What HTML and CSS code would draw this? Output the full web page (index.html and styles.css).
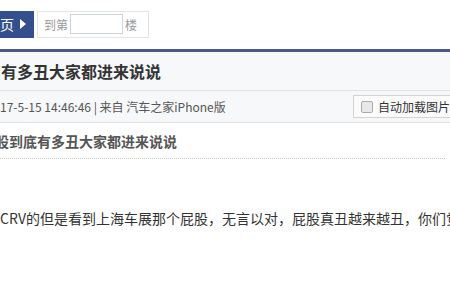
FILE: index.html
```html
<!DOCTYPE html>
<html lang="zh-CN">
<head>
    <meta charset="UTF-8">
    <title>帖子</title>
    <link rel="stylesheet" href="styles.css">
</head>
<body>
    <div class="toolbar">
        <a class="next-btn">页<span class="arrow"></span></a>
        <div class="jump">到第<input class="jump-input" type="text">楼</div>
    </div>

    <div class="post">
        <div class="post-title">有多丑大家都进来说说</div>
        <div class="post-meta">
            <span class="meta-text">17-5-15 14:46:46 | 来自 汽车之家iPhone版</span>
            <label class="auto-img"><span class="check"></span>自动加载图片</label>
        </div>
        <div class="post-body">
            <div class="post-subject">股到底有多丑大家都进来说说</div>
            <p class="post-text">CRV的但是看到上海车展那个屁股，无言以对，屁股真丑越来越丑，你们觉</p>
        </div>
    </div>
</body>
</html>
```

FILE: styles.css
```css
body {
    margin: 0;
    width: 450px;
    overflow: hidden;
    background-color: #fff;
    font-family: "Microsoft YaHei", "Noto Sans CJK SC", sans-serif;
    color: #333;
}

.toolbar {
    display: flex;
    align-items: center;
    height: 49px;
    padding-bottom: 1px;
    box-sizing: border-box;
}

.next-btn {
    display: flex;
    align-items: center;
    width: 34px;
    height: 27px;
    box-sizing: border-box;
    background-color: #34508c;
    color: #fff;
    font-size: 14px;
}

    .next-btn .arrow {
        margin-left: 6px;
        border-left: 6px solid #fff;
        border-top: 5px solid transparent;
        border-bottom: 5px solid transparent;
    }

.jump {
    display: flex;
    align-items: center;
    margin-left: 3px;
    height: 27px;
    padding: 0 11px 0 6px;
    box-sizing: border-box;
    border: 1px solid #e1e4ea;
    font-size: 12px;
    color: #999;
}

.jump-input {
    width: 53px;
    height: 20px;
    box-sizing: border-box;
    margin: 0 2px 0 2px;
    border: 1px solid #cdd4df;
    padding: 0;
}

.post {
    border-top: 3px solid #4a5a86;
}

.post-title {
    height: 38px;
    line-height: 38px;
    padding-left: 1px;
    background-color: #f7f8fa;
    font-size: 16px;
    font-weight: bold;
    color: #333;
    white-space: nowrap;
}

.post-meta {
    display: flex;
    align-items: center;
    justify-content: space-between;
    height: 31px;
    background-color: #f7f8fa;
    border-top: 1px solid #e2e2e2;
    border-bottom: 1px solid #e2e2e2;
}

.meta-text {
    font-size: 12px;
    color: #555;
    white-space: nowrap;
}

.auto-img {
    display: flex;
    align-items: center;
    width: 100px;
    height: 23px;
    box-sizing: border-box;
    margin-right: -3px;
    padding-left: 7px;
    border: 1px solid #d3d3d3;
    background-color: #fbfbfb;
    font-size: 12px;
    color: #333;
    white-space: nowrap;
}

    .auto-img .check {
        width: 10px;
        height: 10px;
        margin-right: 5px;
        border: 1px solid #aaa;
        border-radius: 2px;
        background-color: #e8e8e8;
    }

.post-subject {
    margin-right: 5px;
    padding: 8px 0 7px 0;
    line-height: 20px;
    text-indent: -5px;
    border-bottom: 1px dotted #c8c8c8;
    font-size: 14px;
    font-weight: bold;
    color: #555;
    white-space: nowrap;
}

.post-text {
    margin: 47px 0 0 0;
    line-height: 24px;
    font-size: 14px;
    color: #333;
    white-space: nowrap;
}
```
